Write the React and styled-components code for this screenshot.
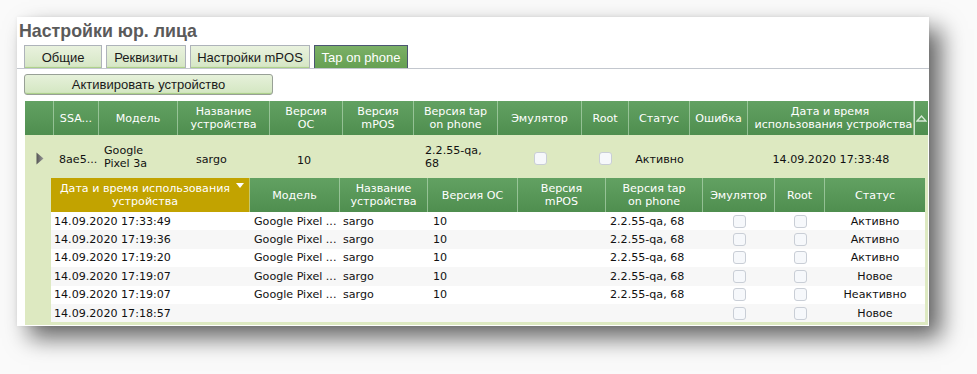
import React from "react";
import styled, { createGlobalStyle } from "styled-components";

const Global = createGlobalStyle`
  html, body { margin: 0; padding: 0; }
  body {
    background: #fafafa;
    font-family: "Liberation Sans", Arial, sans-serif;
    padding: 17px 0 0 17px;
    min-height: 374px;
    box-sizing: border-box;
  }
`;

const Panel = styled.div`
  width: 912px;
  height: 309px;
  background: #fff;
  box-shadow: 12px 12px 22px rgba(0, 0, 0, 0.6), 0 0 4px rgba(0, 0, 0, 0.06);
  display: flex;
  flex-direction: column;
  overflow: hidden;
`;

const Title = styled.h1`
  margin: 0;
  padding: 3px 0 0 2px;
  height: 24px;
  font-size: 17.8px;
  line-height: 22px;
  font-weight: bold;
  color: #5a5a5a;
`;

const Tabs = styled.div`
  display: flex;
  align-items: flex-end;
  gap: 4px;
  padding-left: 7px;
  height: 23px;
  margin-top: 1px;
`;

const Tab = styled.div`
  box-sizing: border-box;
  width: ${(p) => p.$w}px;
  height: 23px;
  display: flex;
  align-items: center;
  justify-content: center;
  font-size: 13px;
  border: 1px solid ${(p) => (p.$active ? "#4b5572" : "#aeb3ba")};
  border-bottom: none;
  color: ${(p) => (p.$active ? "#fff" : "#1a1a1a")};
  background: ${(p) =>
    p.$active
      ? "linear-gradient(#7bb066, #66a053)"
      : "linear-gradient(#e9f2de, #d5e6c4)"};
  box-shadow: ${(p) => (p.$active ? "none" : "inset 0 -2px 1px -1px #a9cf86")};
`;

const Content = styled.div`
  flex: 1;
  border-top: 1px solid #c3c7ce;
  padding: 5px 0 0 7px;
  display: flex;
  flex-direction: column;
`;

const Button = styled.button`
  box-sizing: border-box;
  width: 249px;
  height: 21px;
  border: 1px solid #98a096;
  border-radius: 3px;
  background: linear-gradient(#e6f1da, #d3e6c1);
  box-shadow: inset 0 -2px 1px -1px #a9cf86;
  font-family: "Liberation Sans", Arial, sans-serif;
  font-size: 13px;
  color: #1a1a1a;
  padding: 0;
  cursor: pointer;
`;

const Grid = styled.div`
  margin: 6px 0 0 1px;
  width: 903px;
  font-family: "DejaVu Sans", Verdana, sans-serif;
  font-size: 11.1px;
`;

const mainCols = "29px 45px 79px 92px 73px 71px 84px 84px 47px 61px 58px 166px 14px";
const subCols = "199px 90px 88px 90px 88px 97px 72px 50px 100px";

const HeadRow = styled.div`
  display: grid;
  grid-template-columns: ${(p) => p.$cols};
  height: 34px;
  background: linear-gradient(#62a162, #4f8e4f);
`;

const HeadCell = styled.div`
  position: relative;
  box-sizing: border-box;
  display: flex;
  align-items: center;
  justify-content: center;
  text-align: center;
  color: #fff;
  line-height: 13px;
  padding: ${(p) => (p.$sorted ? "0 16px 0 6px" : p.$tight ? "0" : "0 5px")};
  border-right: 1px solid rgba(200, 230, 200, 0.55);
  border-left: ${(p) => (p.$tight ? "1px solid rgba(235, 245, 235, 0.8)" : "none")};
  overflow: hidden;
  background: ${(p) => (p.$sorted ? "#c2a300" : "transparent")};
  &:last-child { border-right: none; }
`;

const ClipText = styled.div`
  white-space: nowrap;
  text-align: left;
  width: 100%;
  padding-left: 3px;
`;

const CenterLine = styled.div`
  text-align: center;
  padding-right: 4px;
`;

const SortArrow = styled.span`
  position: absolute;
  right: 5px;
  top: 5px;
  width: 0;
  height: 0;
  border-left: 4px solid transparent;
  border-right: 4px solid transparent;
  border-top: 5px solid #fff;
`;

const DataRow = styled.div`
  display: grid;
  grid-template-columns: ${mainCols};
  height: 43px;
  background: #dde9c1;
  color: #111;
`;

const Cell = styled.div`
  display: flex;
  align-items: center;
  justify-content: ${(p) => (p.$center ? "center" : "flex-start")};
  padding-left: ${(p) => (p.$pl != null ? p.$pl : 4)}px;
  padding-top: ${(p) => p.$pt || 0}px;
  line-height: 13px;
  white-space: ${(p) => (p.$nowrap ? "nowrap" : "normal")};
  overflow: hidden;
`;

const Check = styled.span`
  display: inline-block;
  box-sizing: border-box;
  width: 13px;
  height: 13px;
  border: 1px solid #c9ced6;
  border-radius: 3px;
  background: #f6f8fb;
`;

const SubSection = styled.div`
  display: flex;
  background: #dde9c1;
  padding: 0 3px 3px 26px;
`;

const SubTable = styled.div`
  width: 874px;
  display: flex;
  flex-direction: column;
`;

const SubRow = styled.div`
  display: grid;
  grid-template-columns: ${subCols};
  height: 18.4px;
  background: ${(p) => (p.$alt ? "#f7f7f7" : "#fff")};
  color: #111;
`;

const ScrollUp = () => (
  <svg width="11" height="8" viewBox="0 0 11 8">
    <polygon points="1,7 5.5,2 10,7" fill="none" stroke="#d6e9d6" strokeWidth="1.3" />
  </svg>
);

const Expand = () => (
  <svg width="8" height="13" viewBox="0 0 8 13">
    <defs>
      <linearGradient id="eg" x1="0" y1="0" x2="1" y2="0">
        <stop offset="0" stopColor="#555" />
        <stop offset="1" stopColor="#999" />
      </linearGradient>
    </defs>
    <polygon points="0.5,0.5 7.5,6.5 0.5,12.5" fill="url(#eg)" />
  </svg>
);

const subRows = [
  ["14.09.2020 17:33:49", "Google Pixel ...", "sargo", "10", "2.2.55-qa, 68", "Активно"],
  ["14.09.2020 17:19:36", "Google Pixel ...", "sargo", "10", "2.2.55-qa, 68", "Активно"],
  ["14.09.2020 17:19:20", "Google Pixel ...", "sargo", "10", "2.2.55-qa, 68", "Активно"],
  ["14.09.2020 17:19:07", "Google Pixel ...", "sargo", "10", "2.2.55-qa, 68", "Новое"],
  ["14.09.2020 17:19:07", "Google Pixel ...", "sargo", "10", "2.2.55-qa, 68", "Неактивно"],
  ["14.09.2020 17:18:57", "", "", "", "", "Новое"],
];

export default function App() {
  return (
    <>
      <Global />
      <Panel>
        <Title>Настройки юр. лица</Title>
        <Tabs>
          <Tab $w={78}>Общие</Tab>
          <Tab $w={80}>Реквизиты</Tab>
          <Tab $w={120}>Настройки mPOS</Tab>
          <Tab $w={94} $active>Tap on phone</Tab>
        </Tabs>
        <Content>
          <Button>Активировать устройство</Button>
          <Grid>
            <HeadRow $cols={mainCols}>
              <HeadCell />
              <HeadCell>SSA...</HeadCell>
              <HeadCell>Модель</HeadCell>
              <HeadCell>Название устройства</HeadCell>
              <HeadCell>Версия<br />ОС</HeadCell>
              <HeadCell>Версия mPOS</HeadCell>
              <HeadCell>Версия tap<br />on phone</HeadCell>
              <HeadCell>Эмулятор</HeadCell>
              <HeadCell>Root</HeadCell>
              <HeadCell>Статус</HeadCell>
              <HeadCell>Ошибка</HeadCell>
              <HeadCell>
                <ClipText>
                  <CenterLine>Дата и время</CenterLine>
                  <div>использования устройства</div>
                </ClipText>
              </HeadCell>
              <HeadCell $tight>
                <ScrollUp />
              </HeadCell>
            </HeadRow>
            <DataRow>
              <Cell $center $pl={0} $pt={4}>
                <Expand />
              </Cell>
              <Cell $pl={5} $pt={5} $nowrap>8ae5...</Cell>
              <Cell $pl={5}>Google<br />Pixel 3a</Cell>
              <Cell $pl={18} $pt={5}>sargo</Cell>
              <Cell $pl={27} $pt={7}>10</Cell>
              <Cell />
              <Cell $pl={11} $pt={1}>2.2.55-qa,<br />68</Cell>
              <Cell $center $pl={0} $pt={3}><Check /></Cell>
              <Cell $center $pl={0} $pt={3}><Check /></Cell>
              <Cell $center $pl={0} $pt={5}>Активно</Cell>
              <Cell />
              <Cell $center $pl={0} $pt={5} $nowrap>14.09.2020 17:33:48</Cell>
              <Cell />
            </DataRow>
            <SubSection>
              <SubTable>
                <HeadRow $cols={subCols}>
                  <HeadCell $sorted>
                    Дата и время использования устройства
                    <SortArrow />
                  </HeadCell>
                  <HeadCell>Модель</HeadCell>
                  <HeadCell>Название устройства</HeadCell>
                  <HeadCell>Версия ОС</HeadCell>
                  <HeadCell>Версия<br />mPOS</HeadCell>
                  <HeadCell>Версия tap<br />on phone</HeadCell>
                  <HeadCell>Эмулятор</HeadCell>
                  <HeadCell>Root</HeadCell>
                  <HeadCell>Статус</HeadCell>
                </HeadRow>
                {subRows.map((r, i) => (
                  <SubRow key={i} $alt={i % 2 === 1}>
                    <Cell $pl={3} $nowrap>{r[0]}</Cell>
                    <Cell $pl={4} $nowrap>{r[1]}</Cell>
                    <Cell $pl={3} $nowrap>{r[2]}</Cell>
                    <Cell $pl={5} $nowrap>{r[3]}</Cell>
                    <Cell />
                    <Cell $pl={4} $nowrap>{r[4]}</Cell>
                    <Cell $center $pl={0}><Check /></Cell>
                    <Cell $center $pl={0}><Check /></Cell>
                    <Cell $center $pl={0} $nowrap>{r[5]}</Cell>
                  </SubRow>
                ))}
              </SubTable>
            </SubSection>
          </Grid>
        </Content>
      </Panel>
    </>
  );
}
